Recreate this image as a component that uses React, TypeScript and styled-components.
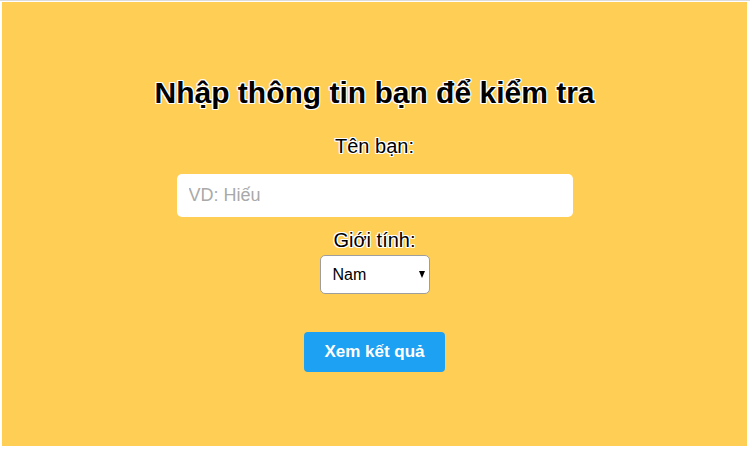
import React, { useState } from 'react';
import styled, { createGlobalStyle } from 'styled-components';

const GlobalStyle = createGlobalStyle`
  html, body {
    margin: 0;
    padding: 0;
    background: #ffffff;
  }
  * {
    box-sizing: border-box;
  }
`

const Page = styled.div`
  width: 750px;
  height: 450px;
  border-top: 1px solid #dcdcdc;
  padding: 1px 3px 4px 2px;
  background: #ffffff;
`

const Panel = styled.div`
  height: 100%;
  background-color: #ffce55;
  display: flex;
  flex-direction: column;
  align-items: center;
  padding-top: 74px;
  font-family: 'Liberation Sans', Arial, sans-serif;
`

const outline = `
  text-shadow:
    1px 1px 0 #fff,
    -1px -1px 0 #fff,
    1px -1px 0 #fff,
    -1px 1px 0 #fff,
    0 1px 0 #fff,
    1px 0 0 #fff,
    0 -1px 0 #fff,
    -1px 0 0 #fff;
`

const Title = styled.h1`
  margin: 0 0 25px;
  font-size: 30px;
  font-weight: bold;
  color: #000;
  ${outline}
`

const Label = styled.label<{ $tight?: boolean }>`
  font-size: 20px;
  line-height: 23px;
  color: #000;
  margin-bottom: ${p => (p.$tight ? '3px' : '16px')};
  ${outline}
`

const Input = styled.input`
  width: 396px;
  height: 43px;
  border: none;
  border-radius: 5px;
  padding: 0 12px;
  font-family: 'Liberation Sans', Arial, sans-serif;
  font-size: 18px;
  outline: none;
  margin-bottom: 12px;

  &::placeholder {
    color: #a9a9a9;
  }
`

const SelectBox = styled.div`
  position: relative;
  width: 110px;
  height: 39px;
  margin-bottom: 38px;
`

const Select = styled.select`
  appearance: none;
  width: 100%;
  height: 100%;
  border: 1px solid #9e9e9e;
  border-radius: 5px;
  background: #fff;
  padding: 0 12px;
  font-family: 'Liberation Sans', Arial, sans-serif;
  font-size: 16px;
  color: #000;
`

const Arrow = styled.span`
  position: absolute;
  right: 5px;
  top: 16px;
  width: 0;
  height: 0;
  border-left: 3.5px solid transparent;
  border-right: 3.5px solid transparent;
  border-top: 7px solid #000;
  pointer-events: none;
`

const Button = styled.button`
  width: 141px;
  height: 40px;
  border: none;
  border-radius: 4px;
  background-color: #1da1f2;
  color: #fff;
  font-family: 'Liberation Sans', Arial, sans-serif;
  font-size: 17px;
  font-weight: bold;
  cursor: pointer;
`

const App = (): JSX.Element => {
  const [name, setName] = useState<string>('')
  const [gender, setGender] = useState<string>('Nam')

  return (
    <Page>
      <GlobalStyle />
      <Panel>
        <Title>Nhập thông tin bạn để kiểm tra</Title>
        <Label htmlFor="name">Tên bạn:</Label>
        <Input id="name" value={name} onChange={(e) => setName(e.target.value)} placeholder="VD: Hiếu" />
        <Label htmlFor="gender" $tight>Giới tính:</Label>
        <SelectBox>
          <Select id="gender" value={gender} onChange={(e) => setGender(e.target.value)}>
            <option>Nam</option>
            <option>Nữ</option>
          </Select>
          <Arrow />
        </SelectBox>
        <Button>Xem kết quả</Button>
      </Panel>
    </Page>
  )
}

export default App;
